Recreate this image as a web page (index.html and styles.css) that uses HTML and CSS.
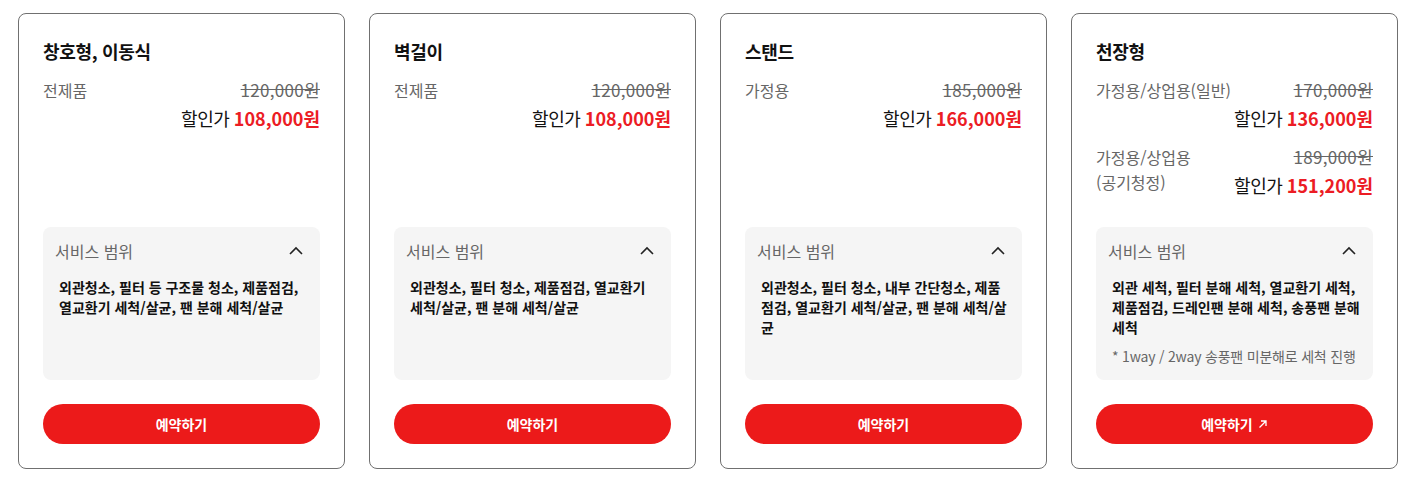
FILE: index.html
```html
<!DOCTYPE html>
<html lang="ko">
<head>
<meta charset="utf-8">
<title>서비스 요금</title>
<link rel="stylesheet" href="styles.css">
</head>
<body>
<div class="cards">
  <section class="card">
    <h2 class="card-title">창호형, 이동식</h2>
    <div class="prices">
      <div class="price-group">
        <div class="label">전제품</div>
        <div class="amounts">
          <div class="orig">120,000원</div>
          <div class="sale">할인가 <strong>108,000원</strong></div>
        </div>
      </div>
    </div>
    <div class="scope">
      <div class="scope-head">
        <span>서비스 범위</span>
        <svg class="chev" width="24" height="24" viewBox="0 0 24 24"><path d="M6 15l6-6 6 6" fill="none" stroke="#222" stroke-width="1.6"/></svg>
      </div>
      <p class="scope-body">외관청소, 필터 등 구조물 청소, 제품점검, 열교환기 세척/살균, 팬 분해 세척/살균</p>
    </div>
    <button class="btn">예약하기</button>
  </section>

  <section class="card">
    <h2 class="card-title">벽걸이</h2>
    <div class="prices">
      <div class="price-group">
        <div class="label">전제품</div>
        <div class="amounts">
          <div class="orig">120,000원</div>
          <div class="sale">할인가 <strong>108,000원</strong></div>
        </div>
      </div>
    </div>
    <div class="scope">
      <div class="scope-head">
        <span>서비스 범위</span>
        <svg class="chev" width="24" height="24" viewBox="0 0 24 24"><path d="M6 15l6-6 6 6" fill="none" stroke="#222" stroke-width="1.6"/></svg>
      </div>
      <p class="scope-body">외관청소, 필터 청소, 제품점검, 열교환기 세척/살균, 팬 분해 세척/살균</p>
    </div>
    <button class="btn">예약하기</button>
  </section>

  <section class="card">
    <h2 class="card-title">스탠드</h2>
    <div class="prices">
      <div class="price-group">
        <div class="label">가정용</div>
        <div class="amounts">
          <div class="orig">185,000원</div>
          <div class="sale">할인가 <strong>166,000원</strong></div>
        </div>
      </div>
    </div>
    <div class="scope">
      <div class="scope-head">
        <span>서비스 범위</span>
        <svg class="chev" width="24" height="24" viewBox="0 0 24 24"><path d="M6 15l6-6 6 6" fill="none" stroke="#222" stroke-width="1.6"/></svg>
      </div>
      <p class="scope-body">외관청소, 필터 청소, 내부 간단청소, 제품점검, 열교환기 세척/살균, 팬 분해 세척/살균</p>
    </div>
    <button class="btn">예약하기</button>
  </section>

  <section class="card">
    <h2 class="card-title">천장형</h2>
    <div class="prices">
      <div class="price-group">
        <div class="label">가정용/상업용(일반)</div>
        <div class="amounts">
          <div class="orig">170,000원</div>
          <div class="sale">할인가 <strong>136,000원</strong></div>
        </div>
      </div>
      <div class="price-group">
        <div class="label">가정용/상업용<br>(공기청정)</div>
        <div class="amounts">
          <div class="orig">189,000원</div>
          <div class="sale">할인가 <strong>151,200원</strong></div>
        </div>
      </div>
    </div>
    <div class="scope">
      <div class="scope-head">
        <span>서비스 범위</span>
        <svg class="chev" width="24" height="24" viewBox="0 0 24 24"><path d="M6 15l6-6 6 6" fill="none" stroke="#222" stroke-width="1.6"/></svg>
      </div>
      <p class="scope-body">외관 세척, 필터 분해 세척, 열교환기 세척, 제품점검, 드레인팬 분해 세척, 송풍팬 분해 세척</p>
      <p class="scope-note">* 1way / 2way 송풍팬 미분해로 세척 진행</p>
    </div>
    <button class="btn">예약하기<svg class="ext" width="10" height="10" viewBox="0 0 10 10"><path d="M1.5 8.5L8 2M3 2H8V7" fill="none" stroke="#fff" stroke-width="1.3"/></svg></button>
  </section>
</div>
</body>
</html>
```

FILE: styles.css
```css
* { box-sizing: border-box; }
body {
  margin: 0;
  background: #fff;
  font-family: "Noto Sans CJK KR", "Noto Sans", sans-serif;
  color: #111;
}
.cards {
  display: grid;
  grid-template-columns: repeat(4, 327px);
  gap: 24px;
  padding: 13px 0 0 18px;
}
.card {
  display: flex;
  flex-direction: column;
  border: 1px solid #707070;
  border-radius: 8px;
  padding: 24px;
  height: 456px;
}
.card-title {
  margin: 0;
  font-size: 18px;
  line-height: 26px;
  font-weight: 700;
  letter-spacing: -0.3px;
  color: #111;
}
.prices {
  flex: 1;
  margin-top: 14px;
  margin-bottom: 28px;
  display: flex;
  flex-direction: column;
  gap: 14px;
}
.price-group {
  display: flex;
  justify-content: space-between;
  align-items: flex-start;
}
.label {
  font-size: 16px;
  line-height: 25px;
  color: #666;
}
.amounts {
  display: flex;
  flex-direction: column;
  align-items: flex-end;
  white-space: nowrap;
}
.orig {
  font-size: 17px;
  line-height: 24px;
  color: #666;
  text-decoration: line-through;
  letter-spacing: 0.3px;
}
.sale {
  margin-top: 3px;
  font-size: 18px;
  line-height: 26px;
  color: #111;
  letter-spacing: -0.5px;
}
.sale strong {
  font-size: 18px;
  font-weight: 700;
  color: #ec1c24;
  letter-spacing: 0;
}
.scope {
  background: #f5f5f5;
  border-radius: 8px;
  min-height: 153px;
  padding: 12px 12px 14px 12px;
}
.scope-head {
  display: flex;
  justify-content: space-between;
  align-items: center;
  font-size: 16px;
  line-height: 24px;
  color: #666;
}
.chev { display: block; }
.scope-body {
  margin: 14px 1px 0 4px;
  font-size: 14px;
  line-height: 20px;
  font-weight: 700;
  color: #111;
}
.scope-note {
  margin: 9px 0 0 4px;
  font-size: 14px;
  line-height: 20px;
  color: #666;
  letter-spacing: -0.2px;
  white-space: nowrap;
}
.btn {
  margin-top: 24px;
  height: 40px;
  border: 0;
  border-radius: 20px;
  background: #ec1a1a;
  color: #fff;
  font-family: inherit;
  font-size: 14px;
  font-weight: 700;
  display: flex;
  align-items: center;
  justify-content: center;
  gap: 5px;
  flex-shrink: 0;
}
.ext { display: block; }
```
